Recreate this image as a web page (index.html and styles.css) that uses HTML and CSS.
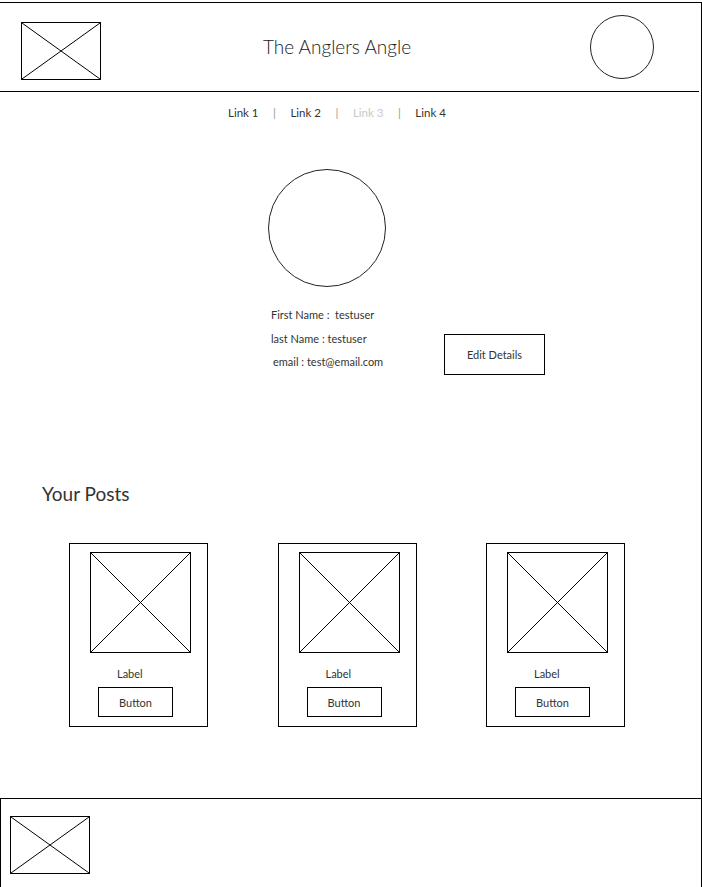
FILE: index.html
```html
<!DOCTYPE html>
<html lang="en">
<head>
<meta charset="utf-8">
<title>The Anglers Angle</title>
<link rel="stylesheet" href="styles.css">
</head>
<body>
<div class="page">
  <header class="header">
    <div class="ph logo">
      <svg viewBox="0 0 100 100" preserveAspectRatio="none"><line x1="0" y1="0" x2="100" y2="100"/><line x1="100" y1="0" x2="0" y2="100"/></svg>
    </div>
    <h1 class="title">The Anglers Angle</h1>
    <div class="avatar-sm"></div>
  </header>

  <nav class="nav">
    <a class="link">Link 1</a><span class="sep">|</span>
    <a class="link">Link 2</a><span class="sep">|</span>
    <a class="link muted">Link 3</a><span class="sep">|</span>
    <a class="link">Link 4</a>
  </nav>

  <main class="main">
    <section class="profile">
      <div class="avatar-lg"></div>
      <div class="details">
        <div class="info">
          <p class="line">First Name :&nbsp; testuser</p>
          <p class="line">last Name : testuser</p>
          <p class="line email">email : test@email.com</p>
        </div>
        <button class="edit">Edit Details</button>
      </div>
    </section>

    <section class="posts">
      <h2 class="posts-title">Your Posts</h2>
      <div class="cards">
        <div class="card">
          <div class="ph thumb"><svg viewBox="0 0 100 100" preserveAspectRatio="none"><line x1="0" y1="0" x2="100" y2="100"/><line x1="100" y1="0" x2="0" y2="100"/></svg></div>
          <div class="card-label">Label</div>
          <button class="card-btn">Button</button>
        </div>
        <div class="card">
          <div class="ph thumb"><svg viewBox="0 0 100 100" preserveAspectRatio="none"><line x1="0" y1="0" x2="100" y2="100"/><line x1="100" y1="0" x2="0" y2="100"/></svg></div>
          <div class="card-label">Label</div>
          <button class="card-btn">Button</button>
        </div>
        <div class="card">
          <div class="ph thumb"><svg viewBox="0 0 100 100" preserveAspectRatio="none"><line x1="0" y1="0" x2="100" y2="100"/><line x1="100" y1="0" x2="0" y2="100"/></svg></div>
          <div class="card-label">Label</div>
          <button class="card-btn">Button</button>
        </div>
      </div>
    </section>
  </main>

  <footer class="footer">
    <div class="ph flogo"><svg viewBox="0 0 100 100" preserveAspectRatio="none"><line x1="0" y1="0" x2="100" y2="100"/><line x1="100" y1="0" x2="0" y2="100"/></svg></div>
  </footer>
</div>
</body>
</html>
```

FILE: styles.css
```css
* { box-sizing: border-box; }

html, body {
  margin: 0;
  padding: 0;
  background: #fff;
}

body {
  font-family: Lato, "Open Sans", "Liberation Sans", sans-serif;
  color: #333;
}

.page {
  width: 702px;
  min-height: 885px;
  margin-top: 2px;
  border-top: 1px solid #000;
  border-right: 1px solid #000;
  display: flex;
  flex-direction: column;
  overflow: hidden;
}

/* placeholders */
.ph {
  border: 1px solid #000;
  background: #fff;
}
.ph svg {
  display: block;
  width: 100%;
  height: 100%;
}
.ph line {
  stroke: #000;
  stroke-width: 1;
  vector-effect: non-scaling-stroke;
}

/* header */
.header {
  width: 699px;
  height: 89px;
  border-bottom: 1px solid #000;
  display: flex;
  align-items: flex-start;
  flex-shrink: 0;
}
.logo {
  width: 80px;
  height: 58px;
  margin-left: 21px;
  margin-top: 19px;
  flex-shrink: 0;
}
.title {
  flex: 1;
  margin: 0;
  padding-right: 17px;
  align-self: center;
  text-align: center;
  font-size: 19px;
  font-weight: 300;
  line-height: 24px;
  color: #222;
}
.avatar-sm {
  width: 64px;
  height: 64px;
  margin-top: 12px;
  margin-right: 45px;
  border: 1px solid #222;
  border-radius: 50%;
  flex-shrink: 0;
}

/* nav */
.nav {
  display: flex;
  gap: 14.5px;
  margin-top: 13px;
  padding-left: 228px;
  font-size: 11.5px;
  line-height: 16px;
}
.link { color: #333; }
.link.muted { color: #c8c8c8; }
.sep { color: #999; }

/* main */
.main {
  flex: 1;
}

.profile {
  display: flex;
  flex-direction: column;
  padding-top: 48px;
}
.avatar-lg {
  width: 118px;
  height: 118px;
  margin-left: 268px;
  border: 1px solid #222;
  border-radius: 50%;
}
.details {
  display: flex;
  align-items: flex-start;
  margin-top: 16px;
  padding-left: 271px;
}
.info {
  width: 173px;
}
.line {
  margin: 0;
  font-size: 11px;
  line-height: 23.5px;
  color: #333;
  white-space: nowrap;
}
.line.email {
  padding-left: 2px;
}
.edit {
  width: 101px;
  height: 41px;
  margin-top: 31px;
  border: 1px solid #000;
  background: #fff;
  font-family: inherit;
  font-size: 11px;
  color: #333;
  padding: 0;
}

/* posts */
.posts {
  margin-top: 107px;
}
.posts-title {
  margin: 0;
  padding-left: 42px;
  font-size: 19px;
  font-weight: 400;
  line-height: 24px;
  color: #333;
}
.cards {
  display: flex;
  gap: 69.5px;
  margin-top: 37px;
  padding-left: 69px;
}
.card {
  width: 139px;
  height: 184px;
  border: 1px solid #000;
  padding-top: 8px;
  display: flex;
  flex-direction: column;
  align-items: flex-start;
}
.thumb {
  width: 101px;
  height: 101px;
  margin-left: 20px;
}
.card-label {
  margin-top: 13px;
  margin-left: 47px;
  font-size: 11px;
  line-height: 16px;
  color: #333;
}
.card-btn {
  width: 75px;
  height: 30px;
  margin-top: 5px;
  margin-left: 28px;
  border: 1px solid #000;
  background: #fff;
  font-family: inherit;
  font-size: 11px;
  color: #333;
  padding: 0;
}

/* footer */
.footer {
  height: 89px;
  border-top: 1px solid #000;
  border-left: 1px solid #000;
  padding-top: 17px;
  padding-left: 9px;
  flex-shrink: 0;
}
.flogo {
  width: 80px;
  height: 58px;
}
```
